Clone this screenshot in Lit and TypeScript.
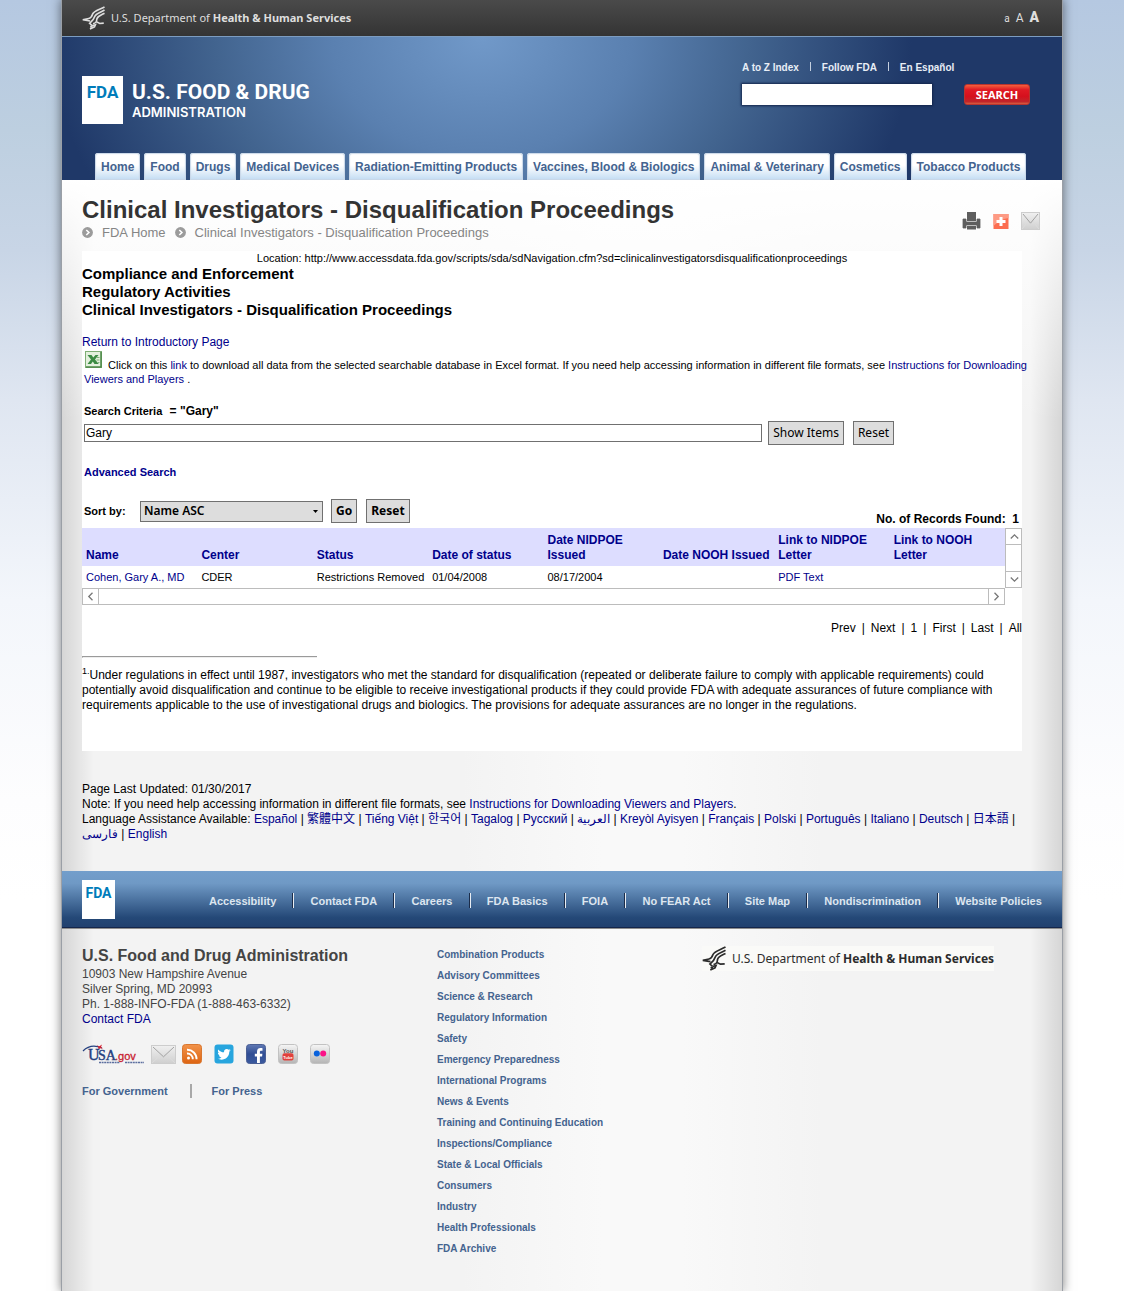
import { LitElement, html, css, svg, nothing } from "lit";
import { customElement, property, state } from "lit/decorators.js";

const TABS = [
  "Home",
  "Food",
  "Drugs",
  "Medical Devices",
  "Radiation-Emitting Products",
  "Vaccines, Blood & Biologics",
  "Animal & Veterinary",
  "Cosmetics",
  "Tobacco Products",
];

const COLUMNS = [
  "Name",
  "Center",
  "Status",
  "Date of status",
  "Date NIDPOE Issued",
  "Date NOOH Issued",
  "Link to NIDPOE Letter",
  "Link to NOOH Letter",
];

const PAGER = ["Prev", "Next", "1", "First", "Last", "All"];

const LANGUAGES: Array<[string, string]> = [
  ["Español", "es"],
  ["繁體中文", "zh-Hant"],
  ["Tiếng Việt", "vi"],
  ["한국어", "ko"],
  ["Tagalog", "tl"],
  ["Русский", "ru"],
  ["العربية", "ar"],
  ["Kreyòl Ayisyen", "ht"],
  ["Français", "fr"],
  ["Polski", "pl"],
  ["Português", "pt"],
  ["Italiano", "it"],
  ["Deutsch", "de"],
  ["日本語", "ja"],
  ["فارسی", "fa"],
  ["English", "en"],
];

const FOOTER_LINKS = [
  "Accessibility",
  "Contact FDA",
  "Careers",
  "FDA Basics",
  "FOIA",
  "No FEAR Act",
  "Site Map",
  "Nondiscrimination",
  "Website Policies",
];

const TOPICS = [
  "Combination Products",
  "Advisory Committees",
  "Science & Research",
  "Regulatory Information",
  "Safety",
  "Emergency Preparedness",
  "International Programs",
  "News & Events",
  "Training and Continuing Education",
  "Inspections/Compliance",
  "State & Local Officials",
  "Consumers",
  "Industry",
  "Health Professionals",
  "FDA Archive",
];

/* Department signature: eagle mark followed by the department name. */
@customElement("hhs-brand")
export class HhsBrand extends LitElement {
  static styles = css`
    :host {
      display: flex;
      align-items: center;
      gap: 6px;
      font: 11px/16px "Noto Sans", "Open Sans", sans-serif;
      white-space: nowrap;
    }
    :host([large]) {
      font-size: 12px;
    }
    .eagle {
      width: 23px;
      height: 24px;
      flex: none;
    }
    :host([large]) .eagle {
      width: 24px;
      height: 25px;
    }
  `;

  render() {
    return html`
      <svg class="eagle" viewBox="0 0 24 25" fill="none" stroke="currentColor" stroke-width="1.7" aria-hidden="true">
        <path d="M23.500 1C18 4 12.500 5 11 8.500C10 11.500 9.500 12.500 7 13L.8 14.300L8.500 15.600" />
        <path d="M23.500 4.200C19 7 14.500 7.500 13.300 11C12.300 14.500 10.500 16 8 18L10.500 20.500" />
        <path d="M23.500 7.500C19 9.800 16.300 10.300 15.600 13.300C15 16 15.500 17.500 11.500 18.500" />
        <path d="M15 16.500L18.500 18.200L22.700 17.800M10.500 20.500L14 19.500L13 21.800L8.300 24M8.500 21.500L11 21.800" />
      </svg>
      <span>U.S. Department of <b>Health &amp; Human Services</b></span>
    `;
  }
}

/* White FDA badge used in the header and in the footer bar. */
@customElement("fda-badge")
export class FdaBadge extends LitElement {
  static styles = css`
    :host {
      display: block;
      box-sizing: border-box;
      width: 41px;
      height: 48px;
      padding-top: 6px;
      background: #fff;
      color: #007cba;
      font: 700 17px/20px Roboto, sans-serif;
      text-align: center;
      flex: none;
    }
    :host([small]) {
      width: 33px;
      height: 39px;
      padding-top: 5px;
      font-size: 14px;
      line-height: 16px;
    }
  `;

  render() {
    return html`FDA`;
  }
}

@customElement("app-root")
export class AppRoot extends LitElement {
  @property() query = "Gary";
  @state() private draft = "Gary";

  static styles = css`
    :host {
      display: block;
      background: linear-gradient(#b5c8e1 0, #bdcfe0 130px, #c8d5e6 250px, #dfe6f1 400px, #f3f6fb 600px, #fdfdfe 800px, #fff 900px);
      color: #000;
      font: 12px/15px "Liberation Sans", Arial, "Noto Sans CJK TC", "Noto Sans CJK KR", sans-serif;
    }
    * {
      box-sizing: border-box;
    }
    a {
      color: #00008b;
      text-decoration: none;
    }
    a:hover {
      text-decoration: underline;
    }
    h1,
    h2,
    h3,
    p,
    ul,
    ol {
      margin: 0;
      padding: 0;
    }
    ul,
    ol {
      list-style: none;
    }
    button,
    input,
    select {
      margin: 0;
      font: inherit;
      border-radius: 0;
    }
    .page {
      max-width: 1000px;
      margin: 0 auto;
      background:
        linear-gradient(#fff 180px, rgba(255, 255, 255, 0) 420px),
        linear-gradient(90deg, rgba(0, 0, 0, 0.12), transparent 32px, transparent calc(100% - 32px), rgba(0, 0, 0, 0.12)),
        linear-gradient(90deg, #f3f3f3 40%, #f9f9f9 54%, #f9f9f9 62%, #f3f3f3 76%);
      box-shadow: 0 0 0 1px #9a9fa6, 0 0 10px 1px rgba(0, 0, 0, 0.5);
    }

    .topbar {
      display: flex;
      align-items: center;
      justify-content: space-between;
      height: 37px;
      padding: 0 23px 0 20px;
      background: linear-gradient(#4a4a4a, #343434);
      border-bottom: 1px solid #7c9cc0;
      color: #dedede;
    }
    .sizes {
      display: flex;
      align-items: baseline;
      gap: 6px;
    }
    .size {
      padding: 0;
      border: 0;
      background: none;
      color: #dedede;
      font: 10px/16px Roboto, sans-serif;
      cursor: pointer;
    }
    .size.mid {
      font-size: 12px;
    }
    .size.big {
      font-size: 14px;
      font-weight: 900;
    }

    .header {
      background: radial-gradient(ellipse 430px 340px at 42% 0, #7199c9, #5a80b0 35%, #42648f 62%, #1f3868 100%);
    }
    .masthead {
      display: flex;
      justify-content: space-between;
      height: 116px;
      padding: 0 20px;
    }
    .brand {
      display: flex;
      gap: 9px;
      padding-top: 39px;
      color: #fff;
    }
    .brand-main {
      display: block;
      padding-top: 4px;
      font: 700 21px/25px Roboto, sans-serif;
    }
    .brand-sub {
      display: block;
      font: 600 13px/14px Inter, sans-serif;
    }
    .utility {
      width: 300px;
      padding-top: 24px;
    }
    .quick {
      display: flex;
      font-size: 10px;
      font-weight: 700;
      line-height: 14px;
    }
    .quick a {
      color: #e8eef6;
    }
    .quick li + li {
      display: flex;
    }
    .quick li + li::before {
      content: "";
      width: 1px;
      height: 9px;
      margin: 1px 11px;
      background: #c4cfdf;
    }
    .search {
      display: flex;
      justify-content: space-between;
      margin-top: 9px;
      padding-right: 12px;
    }
    .search-box {
      width: 190px;
      height: 21px;
      padding: 0 4px;
      border: 0;
      background: #fff;
      box-shadow: 0 0 2px 1px #14264c;
    }
    .search-go {
      width: 66px;
      height: 21px;
      padding: 0;
      border: 1px solid #b8342f;
      border-radius: 3px;
      background: linear-gradient(#f4603d, #e01a24 25%, #d5101d 60%, #c0262a 88%, #d9603f);
      color: #fff;
      font: 700 11px/18px "Open Sans", sans-serif;
    }
    .tabs {
      display: flex;
      gap: 4px;
      padding-left: 33px;
    }
    .tab {
      display: block;
      height: 27px;
      padding: 0 6px;
      border-radius: 3px 3px 0 0;
      background: linear-gradient(#fff 45%, #c2dcf3);
      box-shadow: inset 0 0 1px 1px #c9d8e8;
      color: #44638f;
      font-weight: 700;
      line-height: 28px;
      white-space: nowrap;
    }

    .main {
      padding: 16px 40px 29px 20px;
    }
    .heading {
      display: flex;
      justify-content: space-between;
      margin-right: -18px;
    }
    h1 {
      color: #333;
      font-size: 24px;
      line-height: 28px;
    }
    .crumbs {
      display: flex;
      gap: 9px;
      margin-top: 1px;
      font-size: 13px;
      line-height: 16px;
    }
    .crumbs li {
      display: flex;
      gap: 9px;
    }
    .crumbs a {
      color: #858585;
    }
    .dot {
      width: 11px;
      height: 11px;
      margin-top: 2px;
    }
    .share {
      display: flex;
      align-items: center;
      gap: 12px;
      height: 20px;
      margin-top: 15px;
    }
    .share a {
      display: flex;
    }

    .panel {
      margin-top: 10px;
      padding-bottom: 38px;
      background: #fff;
    }
    .location {
      font-size: 11px;
      line-height: 14px;
      text-align: center;
    }
    h2 {
      font-size: 15px;
      line-height: 18px;
    }
    .return {
      margin-top: 16px;
    }
    .download {
      margin: 1px -8px 0 0;
      padding: 0 0 0 2px;
      font-size: 11px;
      line-height: 14px;
    }
    .excel {
      width: 17px;
      height: 17px;
      margin: 0 3px 0 1px;
      vertical-align: 1px;
    }
    .criteria {
      margin-top: 18px;
      padding-left: 2px;
      font-weight: 700;
      line-height: 14px;
    }
    .criteria label,
    .advanced,
    .sort label {
      font-size: 11px;
      font-weight: 700;
      line-height: 14px;
    }
    .criteria label {
      margin-right: 4px;
    }
    .filter {
      display: flex;
      align-items: center;
      margin-top: 3px;
      padding: 0 128px 0 2px;
    }
    .filter-box {
      flex: 1;
      min-width: 0;
      height: 18px;
      padding: 0 1px;
      border: 1px solid #707070;
      background: #fff;
      margin-right: 6px;
    }
    .btn {
      height: 24px;
      padding: 0 4px;
      border: 1px solid #707070;
      background: #ddd;
      color: #000;
      font: 12px/20px "Noto Sans", sans-serif;
      white-space: nowrap;
    }
    .btn.strong {
      font-weight: 700;
    }
    .btn + .btn {
      margin-left: 9px;
    }
    .advanced {
      margin-top: 20px;
      padding-left: 2px;
    }
    .toolbar {
      display: flex;
      justify-content: space-between;
      align-items: flex-end;
      margin-top: 20px;
      padding: 0 3px 0 2px;
    }
    .sort {
      display: flex;
      align-items: center;
      padding-bottom: 5px;
    }
    .sort label {
      width: 56px;
    }
    .picker {
      display: grid;
      align-items: center;
      width: 183px;
      margin-right: 8px;
    }
    .picker > * {
      grid-area: 1 / 1;
    }
    .picker select {
      height: 21px;
      padding: 0 20px 0 3px;
      appearance: none;
      border: 1px solid #707070;
      background: #ddd;
      color: #000;
      font-family: "Noto Sans", sans-serif;
      font-weight: 600;
      line-height: 18px;
    }
    .arrow {
      justify-self: end;
      width: 5px;
      height: 3px;
      margin-right: 5px;
      pointer-events: none;
    }
    .records {
      font-weight: 700;
      line-height: 18px;
      white-space: pre;
    }

    .grid {
      display: grid;
      grid-template-columns: 1fr 17px;
    }
    table {
      width: 100%;
      border-collapse: collapse;
      table-layout: fixed;
      text-align: left;
    }
    th {
      height: 38px;
      padding: 5px 2px 3px 4px;
      background: #ddf;
      vertical-align: bottom;
    }
    td {
      height: 22px;
      padding: 0 2px 0 4px;
      font-size: 11px;
      white-space: nowrap;
    }
    .bar {
      display: flex;
      justify-content: space-between;
      border: 1px solid #bcbcbc;
      background: #fff;
    }
    .bar.v {
      flex-direction: column;
    }
    .bar.h {
      height: 17px;
    }
    .step {
      display: grid;
      place-items: center;
      width: 16px;
      height: 16px;
      padding: 0;
      border: 0;
      background: none;
    }
    .bar.v .step:first-child {
      border-bottom: 1px solid #bcbcbc;
    }
    .bar.v .step:last-child {
      border-top: 1px solid #bcbcbc;
    }
    .bar.h .step {
      height: 15px;
    }
    .bar.h .step:first-child {
      border-right: 1px solid #bcbcbc;
    }
    .bar.h .step:last-child {
      border-left: 1px solid #bcbcbc;
    }
    .pager {
      display: flex;
      justify-content: flex-end;
      margin-top: 16px;
    }
    .pager a {
      color: #000;
    }
    .pager li + li::before {
      content: "|";
      margin: 0 6px;
    }
    .rule {
      width: 25%;
      height: 2px;
      margin: 20px 0 10px;
      border: 1px solid #9a9a9a;
      border-width: 1px 0 0 1px;
      border-bottom: 1px solid #eee;
    }
    sup {
      font-size: 9px;
      line-height: 0;
    }
    .notes {
      margin-top: 31px;
    }

    .footbar {
      display: flex;
      align-items: center;
      justify-content: space-between;
      gap: 94px;
      height: 58px;
      padding: 0 20px;
      background: linear-gradient(#739ecb, #6f99c5 22%, #244877 82%, #21406e);
      border-bottom: 1px solid #8d8d8d;
      box-shadow: inset 0 -1px #14264c;
    }
    .footlinks {
      flex: 1;
      display: flex;
      justify-content: space-between;
      font-size: 11px;
      font-weight: 700;
      line-height: 16px;
      padding-top: 3px;
    }
    .footlinks a {
      color: #dde6f0;
      white-space: nowrap;
    }
    .footlinks .sep {
      width: 2px;
      height: 15px;
      background: linear-gradient(90deg, #1b2c49 50%, #e8edf3 50%);
    }
    .footer {
      display: grid;
      grid-template-columns: 355fr 265fr 340fr;
      padding: 15px 20px 32px;
      color: #444;
    }
    .address {
      padding-top: 2px;
    }
    h3 {
      padding-bottom: 1px;
      font-size: 16px;
      line-height: 20px;
    }
    .social {
      display: flex;
      align-items: center;
      gap: 12px;
      margin-top: 17px;
    }
    .social a {
      display: flex;
    }
    .social .tight {
      margin-right: -6px;
    }
    .usa {
      display: block;
      width: 63px;
      height: 20px;
    }
    .for {
      display: flex;
      align-items: center;
      margin-top: 20px;
      font-size: 11px;
      font-weight: 700;
      line-height: 14px;
    }
    .for a + a {
      margin-left: 22px;
      padding-left: 20px;
      border-left: 2px solid #a8a8a8;
    }
    .for a,
    .topics a {
      color: #44638f;
    }
    .topics {
      font-size: 10px;
      font-weight: 700;
      line-height: 21px;
    }
    .dept hhs-brand {
      display: inline-flex;
      margin-top: 2px;
      background: #fafaf8;
      color: #2c2c2c;
    }
  `;

  private chevron(d: string) {
    return html`<svg width="9" height="9" viewBox="0 0 9 9" fill="none" stroke="#777" stroke-width="1.300" aria-hidden="true">
      <path d=${d} />
    </svg>`;
  }

  private crumbDot() {
    return html`<svg class="dot" viewBox="0 0 11 11" aria-hidden="true">
      <circle cx="5.500" cy="5.500" r="5.400" fill="#9b9b9b" />
      <path d="M4.300 3L6.900 5.500L4.300 8" fill="none" stroke="#fff" stroke-width="1.600" />
    </svg>`;
  }

  private envelope(w: number, h: number, id: string) {
    return html`<svg width=${w} height=${h} viewBox="0 0 ${w} ${h}" aria-hidden="true">
      <defs>
        <linearGradient id=${id} x1="0" y1="0" x2="0" y2="1">
          <stop offset="0" stop-color="#f0f0f0" />
          <stop offset="1" stop-color="#cfcfcf" />
        </linearGradient>
      </defs>
      <rect x=".5" y=".5" width=${w - 1} height=${h - 1} fill="url(#${id})" stroke="#cdcdcd" />
      <path d="M1 ${h - 1}L${w * 0.4} ${h * 0.5}M${w - 1} ${h - 1}L${w * 0.6} ${h * 0.5}" stroke="#dcdcdc" fill="none" />
      <path d="M2 2L${w / 2} ${h * 0.62}L${w - 2} 2" stroke="#a2a2a2" fill="none" />
    </svg>`;
  }

  private tile(fill: string, art: unknown, edge = "none") {
    return html`<svg width="20" height="20" viewBox="0 0 20 20" aria-hidden="true">
      <defs>
        <linearGradient id="rss" x1="0" y1="0" x2="0" y2="1">
          <stop offset="0" stop-color="#f2934a" /><stop offset="1" stop-color="#dd6412" />
        </linearGradient>
        <linearGradient id="fb" x1="0" y1="0" x2="0" y2="1">
          <stop offset="0" stop-color="#6079b4" /><stop offset=".5" stop-color="#2f4d94" /><stop offset="1" stop-color="#3b5a9f" />
        </linearGradient>
        <linearGradient id="gray" x1="0" y1="0" x2="0" y2="1">
          <stop offset="0" stop-color="#f6f6f6" /><stop offset="1" stop-color="#b4b4b4" />
        </linearGradient>
      </defs>
      <rect x=".5" y=".5" width="19" height="19" rx="3" fill=${fill} stroke=${edge} />
      ${art}
    </svg>`;
  }

  private social() {
    return html`
      <div class="social">
        <a class="tight" href="#usa" aria-label="USA.gov">
          <svg class="usa" viewBox="0 0 63 20" aria-hidden="true">
            <path d="M1 7C6 2 13 1 20 4" fill="none" stroke="#24407f" stroke-width="1.200" />
            <path d="M15 1L17 2.500L20 .500L19 3L21 4.500L18 4.300L16.500 6L16.300 3.600Z" fill="#d3202f" />
            <text x="6" y="16" font-family="Liberation Serif, serif" font-size="16" fill="#24407f" stroke="#24407f" stroke-width=".4">U</text>
            <text x="16" y="16" font-family="Liberation Serif, serif" font-size="14" fill="#24407f" stroke="#24407f" stroke-width=".4">SA</text>
            <text x="33" y="16" font-family="Liberation Sans, sans-serif" font-size="11" fill="#c8202f" stroke="#c8202f" stroke-width=".3">.gov</text>
            <path d="M17 18.500H38M43 18.500H62" stroke="#5c6f9f" stroke-width="1.500" stroke-dasharray="2 .6" />
          </svg>
        </a>
        <a class="tight" href="#email" aria-label="Email updates">${this.envelope(25, 19, "env-b")}</a>
        <a href="#rss" aria-label="RSS">
          ${this.tile(
            "url(#rss)",
            svg`<circle cx="6.500" cy="14" r="1.500" fill="#fff"/><path d="M5 9.500A5.500 5.500 0 0 1 10.800 15.300M5 5.800A9.300 9.300 0 0 1 14.600 15.300" fill="none" stroke="#fff" stroke-width="1.900"/>`,
            "#d9772f",
          )}
        </a>
        <a href="#twitter" aria-label="Twitter">
          ${this.tile(
            "#27a5de",
            svg`<path d="M16.800 6.200c-.5.200-1 .4-1.600.4.600-.3 1-.9 1.200-1.500-.5.300-1.100.5-1.700.7a2.800 2.800 0 0 0-4.700 2.500C7.700 8.200 5.700 7.100 4.300 5.400c-.7 1.300-.4 2.900.9 3.700-.5 0-.9-.1-1.300-.3 0 1.300.9 2.500 2.200 2.700-.4.100-.8.100-1.200 0 .4 1.100 1.400 1.900 2.600 1.900A5.600 5.600 0 0 1 3.400 14.600c4.900 3 12-.1 11.900-7 .6-.4 1.100-.9 1.500-1.400z" fill="#fff"/>`,
          )}
        </a>
        <a href="#facebook" aria-label="Facebook">
          ${this.tile(
            "url(#fb)",
            svg`<path d="M11 19v-6.500H8.800V9.700H11V7.800C11 5 12.500 4 14.500 4c.9 0 1.700.1 2 .2v2.500h-1.400c-1 0-1.200.6-1.200 1.300v1.700h2.500l-.3 2.800h-2.200V19z" fill="#fff"/>`,
            "#4a5f94",
          )}
        </a>
        <a href="#youtube" aria-label="YouTube">
          ${this.tile(
            "url(#gray)",
            svg`<text x="10" y="8.500" text-anchor="middle" font-family="Liberation Sans" font-size="6" font-weight="700" fill="#555">You</text><rect x="4.500" y="9.200" width="11" height="7.300" rx="1.800" fill="#e2403b"/><text x="10" y="15" text-anchor="middle" font-family="Liberation Sans" font-size="4" font-weight="700" fill="#fff">Tube</text>`,
            "#c2c2c2",
          )}
        </a>
        <a href="#flickr" aria-label="Flickr">
          ${this.tile(
            "url(#gray)",
            svg`<circle cx="6.800" cy="9.500" r="3" fill="#0a62dc"/><circle cx="13.200" cy="9.500" r="3" fill="#fb1187"/>`,
            "#c2c2c2",
          )}
        </a>
      </div>
    `;
  }

  private onInput(e: Event) {
    this.draft = (e.target as HTMLInputElement).value;
  }

  render() {
    return html`
      <div class="page">
        <div class="topbar">
          <hhs-brand></hhs-brand>
          <div class="sizes">
            <button class="size" aria-label="Small text">a</button>
            <button class="size mid" aria-label="Medium text">A</button>
            <button class="size big" aria-label="Large text">A</button>
          </div>
        </div>

        <header class="header">
          <div class="masthead">
            <div class="brand">
              <fda-badge></fda-badge>
              <div>
                <span class="brand-main">U.S. FOOD &amp; DRUG</span>
                <span class="brand-sub">ADMINISTRATION</span>
              </div>
            </div>
            <div class="utility">
              <ul class="quick">
                <li><a href="#index">A to Z Index</a></li>
                <li><a href="#follow">Follow FDA</a></li>
                <li><a href="#es" lang="es">En Español</a></li>
              </ul>
              <form class="search" @submit=${(e: Event) => e.preventDefault()}>
                <input class="search-box" type="text" aria-label="Search FDA" />
                <button class="search-go">SEARCH</button>
              </form>
            </div>
          </div>
          <nav class="tabs">${TABS.map((t) => html`<a class="tab" href="#nav">${t}</a>`)}</nav>
        </header>

        <main class="main">
          <div class="heading">
            <div>
              <h1>Clinical Investigators - Disqualification Proceedings</h1>
              <ol class="crumbs">
                <li>${this.crumbDot()}<a href="#home">FDA Home</a></li>
                <li>${this.crumbDot()}<a href="#here">Clinical Investigators - Disqualification Proceedings</a></li>
              </ol>
            </div>
            <div class="share">
              <a href="#print" aria-label="Print">
                <svg width="19" height="18" viewBox="0 0 19 18" aria-hidden="true">
                  <rect x="5" y="0" width="9" height="9" fill="#5e5e5e" />
                  <path d="M1 7H4V10H15V7H18V16H15V13H4V16H1Z" fill="#5e5e5e" stroke="#5e5e5e" stroke-width=".8" />
                  <rect x="5" y="14" width="9" height="3.500" fill="#5e5e5e" />
                </svg>
              </a>
              <a href="#share" aria-label="Share">
                <svg width="16" height="15" viewBox="0 0 16 15" aria-hidden="true">
                  <rect x=".5" width="15" height="15" fill="#fc6e51" />
                  <path d="M.5 0H15.500V4C9 5 5 8 .5 12Z" fill="#fd9a84" />
                  <path d="M8 3V12M3.500 7.500H12.500" stroke="#fff" stroke-width="3" />
                </svg>
              </a>
              <a href="#mail" aria-label="Email">${this.envelope(19, 18, "env-a")}</a>
            </div>
          </div>

          <section class="panel">
            <p class="location">
              Location: http://www.accessdata.fda.gov/scripts/sda/sdNavigation.cfm?sd=clinicalinvestigatorsdisqualificationproceedings
            </p>
            <h2>Compliance and Enforcement</h2>
            <h2>Regulatory Activities</h2>
            <h2>Clinical Investigators - Disqualification Proceedings</h2>
            <p class="return"><a href="#intro">Return to Introductory Page</a></p>
            <p class="download">
              <svg class="excel" viewBox="0 0 17 17" aria-hidden="true">
                <rect x=".5" y=".5" width="16" height="16" fill="#e3f0dd" stroke="#7fae75" />
                <path d="M16 1V16H1" fill="none" stroke="#4b8745" stroke-width="1.500" />
                <path d="M2.500 4H6.500L8.300 6.500L10.500 4H13.500L10 8.500L13.800 13H9.500L7.800 10.500L6 13H2.500L6 8.500Z" fill="#3b8b43" />
                <path d="M11.500 6.500H14.500M11.500 9H14.500M13 11.500H14.500" stroke="#7fb279" />
              </svg>
              Click on this <a href="#xls">link</a> to download all data from the selected searchable database in Excel
              format. If you need help accessing information in different file formats, see
              <a href="#help">Instructions for Downloading Viewers and Players</a> .
            </p>

            <p class="criteria"><label for="q">Search Criteria</label> = "${this.query}"</p>
            <div class="filter">
              <input id="q" class="filter-box" type="text" .value=${this.draft} @input=${this.onInput} />
              <button class="btn" @click=${() => (this.query = this.draft)}>Show Items</button>
              <button class="btn" @click=${() => (this.draft = "")}>Reset</button>
            </div>
            <p class="advanced"><a href="#advanced">Advanced Search</a></p>

            <div class="toolbar">
              <div class="sort">
                <label for="sort">Sort by:</label>
                <span class="picker">
                  <select id="sort">
                    <option>Name ASC</option>
                    <option>Name DESC</option>
                  </select>
                  <svg class="arrow" viewBox="0 0 5 3" aria-hidden="true"><path d="M0 0H5L2.500 3Z" /></svg>
                </span>
                <button class="btn strong">Go</button>
                <button class="btn strong">Reset</button>
              </div>
              <p class="records">No. of Records Found:  1</p>
            </div>

            <div class="grid">
              <table>
                <thead>
                  <tr>
                    ${COLUMNS.map((c) => html`<th scope="col"><a href="#sort">${c}</a></th>`)}
                  </tr>
                </thead>
                <tbody>
                  <tr>
                    <td><a href="#cohen">Cohen, Gary A., MD</a></td>
                    <td>CDER</td>
                    <td>Restrictions Removed</td>
                    <td>01/04/2008</td>
                    <td>08/17/2004</td>
                    <td></td>
                    <td><a href="#pdf">PDF</a> <a href="#text">Text</a></td>
                    <td></td>
                  </tr>
                </tbody>
              </table>
              <div class="bar v">
                <button class="step" aria-label="Scroll up">${this.chevron("M.8 6.500L4.500 2.800L8.200 6.500")}</button>
                <button class="step" aria-label="Scroll down">${this.chevron("M.8 2.500L4.500 6.200L8.200 2.500")}</button>
              </div>
              <div class="bar h">
                <button class="step" aria-label="Scroll left">${this.chevron("M6.500 .8L2.800 4.500L6.500 8.200")}</button>
                <button class="step" aria-label="Scroll right">${this.chevron("M2.500 .8L6.200 4.500L2.500 8.200")}</button>
              </div>
            </div>

            <ul class="pager">${PAGER.map((p) => html`<li><a href="#page">${p}</a></li>`)}</ul>

            <hr class="rule" />
            <p>
              <sup>1.</sup>Under regulations in effect until 1987, investigators who met the standard for disqualification
              (repeated or deliberate failure to comply with applicable requirements) could potentially avoid
              disqualification and continue to be eligible to receive investigational products if they could provide FDA
              with adequate assurances of future compliance with requirements applicable to the use of investigational
              drugs and biologics. The provisions for adequate assurances are no longer in the regulations.
            </p>
          </section>

          <div class="notes">
            <p>Page Last Updated: 01/30/2017</p>
            <p>
              Note: If you need help accessing information in different file formats, see
              <a href="#help">Instructions for Downloading Viewers and Players</a>.
            </p>
            <p>
              Language Assistance Available:
              ${LANGUAGES.map(
                ([name, code], i) => html`${i ? " | " : nothing}<a href="#lang" lang=${code}><bdi>${name}</bdi></a>`,
              )}
            </p>
          </div>
        </main>

        <nav class="footbar">
          <fda-badge small></fda-badge>
          <div class="footlinks">
            ${FOOTER_LINKS.map(
              (l, i) => html`${i ? html`<span class="sep"></span>` : nothing}<a href="#footer">${l}</a>`,
            )}
          </div>
        </nav>

        <footer class="footer">
          <div class="address">
            <h3>U.S. Food and Drug Administration</h3>
            <p>10903 New Hampshire Avenue</p>
            <p>Silver Spring, MD 20993</p>
            <p>Ph. 1-888-INFO-FDA (1-888-463-6332)</p>
            <p><a href="#contact">Contact FDA</a></p>
            ${this.social()}
            <div class="for"><a href="#gov">For Government</a><a href="#press">For Press</a></div>
          </div>
          <ul class="topics">${TOPICS.map((t) => html`<li><a href="#topic">${t}</a></li>`)}</ul>
          <div class="dept"><hhs-brand large></hhs-brand></div>
        </footer>
      </div>
    `;
  }
}
